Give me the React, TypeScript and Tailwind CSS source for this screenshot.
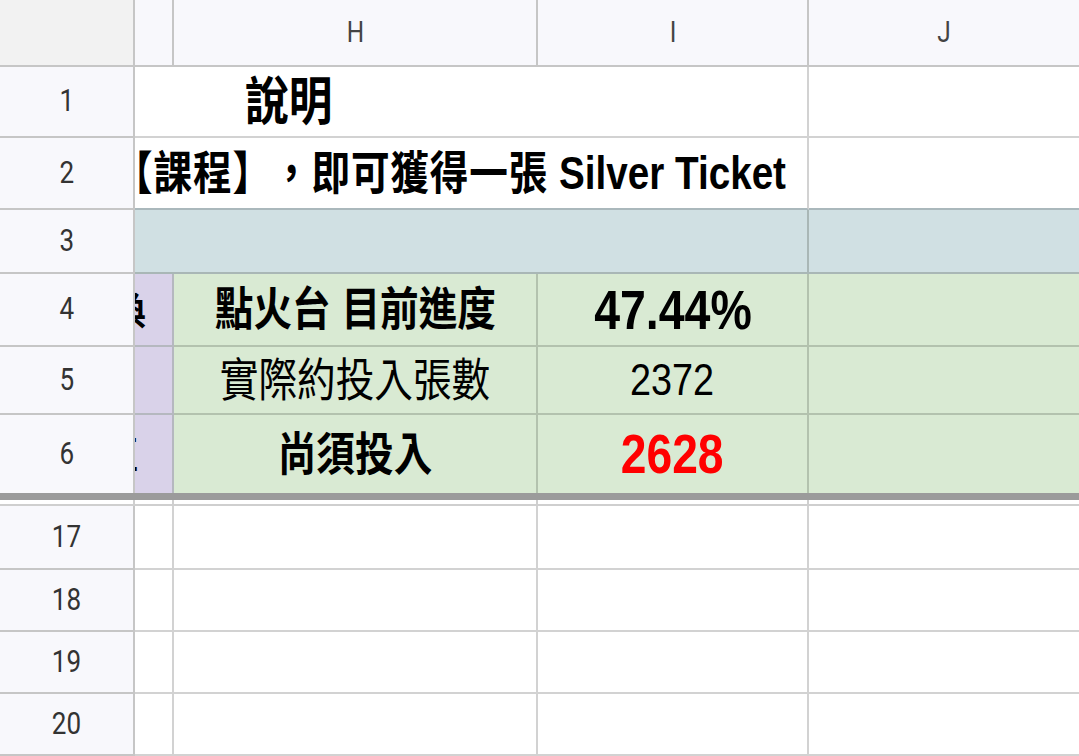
import React from "react";

const cellFont = "font-[family-name:'Liberation_Sans','Noto_Sans_CJK_TC',sans-serif]";
const hdrFont = "font-[family-name:Roboto,'Liberation_Sans',sans-serif]";

// row header cell (numbers on the left)
const RowHead = ({ n, h }: { n: string; h: string }) => (
  <div
    className={`w-[135px] shrink-0 ${h} flex items-center justify-center border-r-2 border-b-2 border-[#c6c6c6] bg-[#f8f8fc] ${hdrFont} text-[31px] text-[#333]`}
  >
    <span className="inline-block scale-x-[0.84]">{n}</span>
  </div>
);

const ColHead = ({ label, w, last }: { label: string; w: string; last?: boolean }) => (
  <div
    className={`${w} h-full flex items-center justify-center border-b-2 border-[#c6c6c6] bg-[#f8f8fc] ${
      last ? "" : "border-r-2"
    } ${hdrFont} text-[29px] text-[#444]`}
  >
    <span className="inline-block scale-x-[0.84]">{label}</span>
  </div>
);

const EmptyRow = ({ n, h }: { n: string; h: string }) => (
  <div className={`flex ${h}`}>
    <RowHead n={n} h="h-full" />
    <div className="w-[39px] shrink-0 border-r-2 border-b-2 border-[#d2d2d2] bg-white" />
    <div className="w-[364px] shrink-0 border-r-2 border-b-2 border-[#d2d2d2] bg-white" />
    <div className="w-[271px] shrink-0 border-r-2 border-b-2 border-[#d2d2d2] bg-white" />
    <div className="flex-1 border-b-2 border-[#d2d2d2] bg-white" />
  </div>
);

export default function App() {
  return (
    <div
      lang="zh-Hant"
      className={`w-[1079px] h-[756px] overflow-hidden bg-white ${cellFont} [text-spacing-trim:space-all]`}
    >
      {/* column headers */}
      <div className="flex h-[67px]">
        <div className="w-[135px] shrink-0 border-r-2 border-b-2 border-[#c6c6c6] bg-[#f2f2f2]" />
        <ColHead label="" w="w-[39px] shrink-0" />
        <ColHead label="H" w="w-[364px] shrink-0" />
        <ColHead label="I" w="w-[271px] shrink-0" />
        <ColHead label="J" w="flex-1" last />
      </div>

      {/* row 1 */}
      <div className="flex h-[71px]">
        <RowHead n="1" h="h-full" />
        <div className="w-[674px] shrink-0 flex items-center pl-[110px] border-r-2 border-b-2 border-[#d2d2d2] bg-white overflow-hidden">
          <span className="inline-block origin-left scale-x-[0.84] text-[52px] font-bold text-black whitespace-nowrap">
            說明
          </span>
        </div>
        <div className="flex-1 border-b-2 border-[#d2d2d2] bg-white" />
      </div>

      {/* row 2 */}
      <div className="flex h-[72px]">
        <RowHead n="2" h="h-full" />
        <div className="w-[674px] shrink-0 flex items-center justify-end pr-[21px] border-r-2 border-b-2 border-r-[#d2d2d2] border-b-[#aab8bc] bg-white overflow-hidden">
          <span className="inline-block shrink-0 origin-right scale-x-[0.84] text-[46px] font-bold text-black whitespace-nowrap">
            <span className="tracking-[1px]">【課程】，即可獲得一張</span> Silver Ticket
          </span>
        </div>
        <div className="flex-1 border-b-2 border-[#aab8bc] bg-white" />
      </div>

      {/* row 3 */}
      <div className="flex h-[64px]">
        <RowHead n="3" h="h-full" />
        <div className="w-[674px] shrink-0 border-r-2 border-b-2 border-[#a9b7b6] bg-[#d0e0e3]" />
        <div className="flex-1 border-b-2 border-[#a9b7b6] bg-[#d0e0e3]" />
      </div>

      {/* row 4 */}
      <div className="flex h-[73px]">
        <RowHead n="4" h="h-full" />
        <div className="w-[39px] shrink-0 flex items-center overflow-hidden border-r-2 border-b-2 border-[#b5b8bf] bg-[#d9d2e9]">
          <span className="inline-block shrink-0 ml-[-29px] text-[40px] font-bold text-black">換</span>
        </div>
        <div className="w-[364px] shrink-0 flex items-center justify-center border-r-2 border-b-2 border-[#b3c2ae] bg-[#d9ead3]">
          <span className="inline-block scale-x-[0.84] text-[46px] font-bold text-black whitespace-nowrap">
            點火台 目前進度
          </span>
        </div>
        <div className="w-[271px] shrink-0 flex items-center justify-center border-r-2 border-b-2 border-[#b3c2ae] bg-[#d9ead3]">
          <span className="inline-block scale-x-[0.83] text-[56px] font-bold text-black">47.44%</span>
        </div>
        <div className="flex-1 border-b-2 border-[#b3c2ae] bg-[#d9ead3]" />
      </div>

      {/* row 5 */}
      <div className="flex h-[68px]">
        <RowHead n="5" h="h-full" />
        <div className="w-[39px] shrink-0 border-r-2 border-b-2 border-[#b5b8bf] bg-[#d9d2e9]" />
        <div className="w-[364px] shrink-0 flex items-center justify-center border-r-2 border-b-2 border-[#b3c2ae] bg-[#d9ead3]">
          <span className="inline-block scale-x-[0.84] text-[46px] text-black whitespace-nowrap">實際約投入張數</span>
        </div>
        <div className="w-[271px] shrink-0 flex items-center justify-center border-r-2 border-b-2 border-[#b3c2ae] bg-[#d9ead3]">
          <span className="inline-block scale-x-[0.84] text-[45px] text-black">2372</span>
        </div>
        <div className="flex-1 border-b-2 border-[#b3c2ae] bg-[#d9ead3]" />
      </div>

      {/* row 6 */}
      <div className="flex h-[78px]">
        <div className="w-[135px] shrink-0 flex items-center justify-center border-r-2 border-[#c6c6c6] bg-[#f8f8fc] font-[family-name:Roboto,sans-serif] text-[31px] text-[#333]">
          <span className="inline-block scale-x-[0.84]">6</span>
        </div>
        <div className="w-[39px] shrink-0 flex items-center overflow-hidden border-r-2 border-[#b5b8bf] bg-[#d9d2e9]">
          <span className="inline-block shrink-0 ml-[-37px] text-[40px] font-bold text-black">值</span>
        </div>
        <div className="w-[364px] shrink-0 flex items-center justify-center border-r-2 border-[#b3c2ae] bg-[#d9ead3]">
          <span className="inline-block scale-x-[0.84] text-[46px] font-bold text-black whitespace-nowrap">尚須投入</span>
        </div>
        <div className="w-[271px] shrink-0 flex items-center justify-center border-r-2 border-[#b3c2ae] bg-[#d9ead3]">
          <span className="inline-block scale-x-[0.84] text-[55px] font-bold text-[#ff0000]">2628</span>
        </div>
        <div className="flex-1 bg-[#d9ead3]" />
      </div>

      {/* frozen divider */}
      <div className="h-[7px] bg-[#9b9b9b]" />
      <div className="flex h-[6px]">
        <div className="w-[135px] shrink-0 border-r-2 border-b-2 border-[#cfcfcf] bg-white" />
        <div className="w-[39px] shrink-0 border-r-2 border-b-2 border-[#cfcfcf] bg-white" />
        <div className="w-[364px] shrink-0 border-r-2 border-b-2 border-[#cfcfcf] bg-white" />
        <div className="w-[271px] shrink-0 border-r-2 border-b-2 border-[#cfcfcf] bg-white" />
        <div className="flex-1 border-b-2 border-[#cfcfcf] bg-white" />
      </div>

      <EmptyRow n="17" h="h-[64px]" />
      <EmptyRow n="18" h="h-[62px]" />
      <EmptyRow n="19" h="h-[62px]" />
      <EmptyRow n="20" h="h-[62px]" />
    </div>
  );
}
